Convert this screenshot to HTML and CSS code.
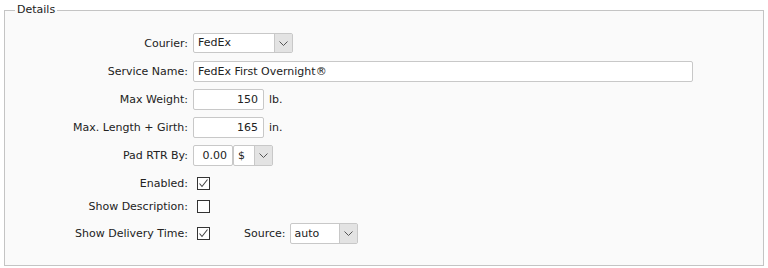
FILE: index.html
```html
<!DOCTYPE html>
<html>
<head>
<meta charset="utf-8">
<link rel="stylesheet" href="styles.css">
</head>
<body>
<fieldset class="details">
  <legend class="legend">Details</legend>
  <div class="form">
    <div class="row r1">
      <label class="lbl">Courier:</label>
      <div class="ctl">
        <div class="select w-courier"><span class="sel-text">FedEx</span><span class="sel-btn"><svg width="9" height="5" viewBox="0 0 9 5"><path d="M0.5 0.5 L4.5 4.5 L8.5 0.5" fill="none" stroke="#555" stroke-width="1"/></svg></span></div>
      </div>
    </div>
    <div class="row r2">
      <label class="lbl">Service Name:</label>
      <div class="ctl"><div class="input w-service">FedEx First Overnight®</div></div>
    </div>
    <div class="row r3">
      <label class="lbl">Max Weight:</label>
      <div class="ctl"><div class="input num w-num">150</div><span class="unit">lb.</span></div>
    </div>
    <div class="row r4">
      <label class="lbl">Max. Length + Girth:</label>
      <div class="ctl"><div class="input num w-num">165</div><span class="unit">in.</span></div>
    </div>
    <div class="row r5">
      <label class="lbl">Pad RTR By:</label>
      <div class="ctl">
        <div class="input num w-pad">0.00</div>
        <div class="select w-cur"><span class="sel-text">$</span><span class="sel-btn"><svg width="9" height="5" viewBox="0 0 9 5"><path d="M0.5 0.5 L4.5 4.5 L8.5 0.5" fill="none" stroke="#555" stroke-width="1"/></svg></span></div>
      </div>
    </div>
    <div class="row r6">
      <label class="lbl">Enabled:</label>
      <div class="ctl"><span class="check"><svg width="11" height="11" viewBox="0 0 11 11"><path d="M1.5 5.5 L4 8.5 L9.5 1.5" fill="none" stroke="#444" stroke-width="1.1"/></svg></span></div>
    </div>
    <div class="row r7">
      <label class="lbl">Show Description:</label>
      <div class="ctl"><span class="check"></span></div>
    </div>
    <div class="row r8">
      <label class="lbl">Show Delivery Time:</label>
      <div class="ctl">
        <span class="check"><svg width="11" height="11" viewBox="0 0 11 11"><path d="M1.5 5.5 L4 8.5 L9.5 1.5" fill="none" stroke="#444" stroke-width="1.1"/></svg></span>
        <label class="src-lbl">Source:</label>
        <div class="select w-source"><span class="sel-text">auto</span><span class="sel-btn"><svg width="9" height="5" viewBox="0 0 9 5"><path d="M0.5 0.5 L4.5 4.5 L8.5 0.5" fill="none" stroke="#555" stroke-width="1"/></svg></span></div>
      </div>
    </div>
  </div>
</fieldset>
</body>
</html>
```
FILE: styles.css
```css
html, body {
  margin: 0;
  padding: 0;
  background: #ffffff;
}
body {
  padding: 3px 4px 0 4px;
  font-family: "DejaVu Sans", sans-serif;
  font-size: 11px;
  color: #222222;
}
.details {
  margin: 0;
  border: 1px solid #c4c4c4;
  background: #fafafa;
  padding: 0 10px 15px 10px;
  min-width: 0;
}
.legend {
  padding: 0 2px;
  font-size: 11px;
  line-height: 14px;
  color: #222222;
}
.form {
  display: flex;
  flex-direction: column;
  padding-top: 12px;
}
.row {
  display: flex;
  align-items: center;
  gap: 5px;
}
.r1 { height: 28px; }
.r2 { height: 28px; }
.r3 { height: 28px; }
.r4 { height: 28px; }
.r5 { height: 28px; }
.r6 { height: 28px; }
.r7 { height: 19px; }
.r8 { height: 34px; }
.lbl {
  width: 173px;
  text-align: right;
  white-space: nowrap;
}
.ctl {
  display: flex;
  align-items: center;
}
.input {
  box-sizing: border-box;
  height: 21px;
  line-height: 19px;
  border: 1px solid #c8c8c8;
  border-radius: 2px;
  background: #ffffff;
  padding: 0 4px;
  white-space: nowrap;
  overflow: hidden;
}
.num { text-align: right; padding-right: 5px; }
.w-service { width: 500px; }
.w-num { width: 71px; }
.w-pad { width: 40px; }
.unit { margin-left: 5px; }
.select {
  box-sizing: border-box;
  height: 21px;
  border: 1px solid #c8c8c8;
  border-radius: 2px;
  background: #ffffff;
  display: flex;
  align-items: stretch;
}
.sel-text {
  flex: 1;
  line-height: 19px;
  padding-left: 4px;
  white-space: nowrap;
}
.sel-btn {
  width: 17px;
  background: #e3e3e3;
  border-left: 1px solid #c8c8c8;
  display: flex;
  align-items: center;
  justify-content: center;
}
.w-courier { width: 100px; height: 20px; }
.w-courier .sel-text { line-height: 18px; }
.w-cur { width: 40px; margin-left: 0; }
.w-source { width: 68px; }
.check {
  box-sizing: border-box;
  width: 13px;
  height: 13px;
  margin-left: 4px;
  border: 1px solid #333333;
  background: #ffffff;
  display: flex;
  align-items: center;
  justify-content: center;
}
.src-lbl { margin-left: 34px; margin-right: 4px; }
```
